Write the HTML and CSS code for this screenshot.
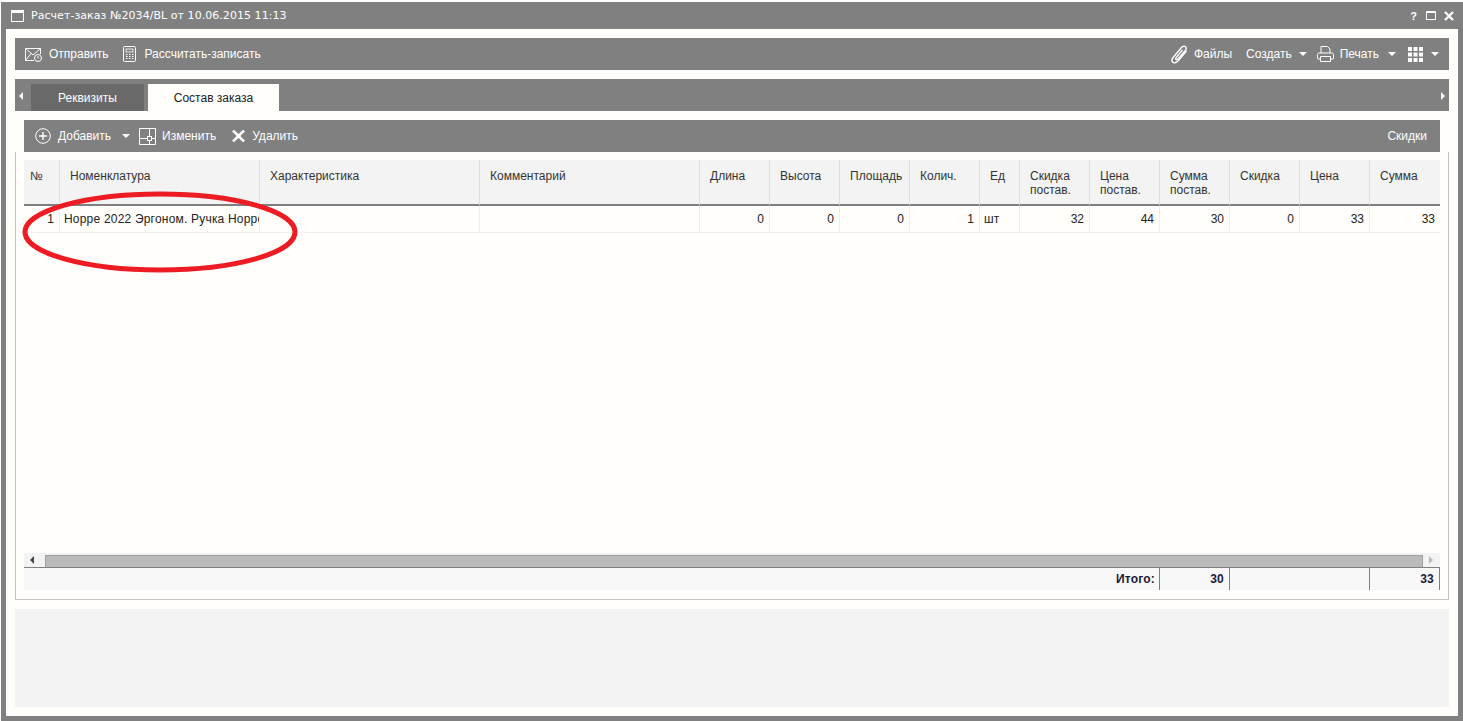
FILE: index.html
```html
<!DOCTYPE html>
<html lang="ru">
<head>
  <meta charset="UTF-8" />
  <title>Расчет-заказ №2034/BL</title>
  <link rel="stylesheet" href="styles.css">
</head>
<body>
  <div class="window">
    <div class="titlebar">
      <svg class="title-icon" width="13" height="12" viewBox="0 0 13 12"><rect x="0.5" y="0.5" width="12" height="11" fill="none" stroke="#fff"/><rect x="0" y="0" width="13" height="3" fill="#fff"/></svg>
      <span class="title">Расчет-заказ №2034/BL от 10.06.2015 11:13</span>
      <div class="window-btns">
        <span class="help">?</span>
        <svg width="10" height="9" viewBox="0 0 10 9"><rect x="0.5" y="1" width="9" height="7.5" fill="none" stroke="#fff"/><rect x="0" y="0" width="10" height="2" fill="#fff"/></svg>
        <svg width="10" height="10" viewBox="0 0 10 10"><path d="M1 1l8 8M9 1l-8 8" stroke="#fff" stroke-width="2.2" fill="none"/></svg>
      </div>
    </div>

    <div class="content">
      <div class="toolbar main-toolbar">
        <div class="tool">
          <svg width="18" height="15" viewBox="0 0 18 15"><path d="M9 13.500H.5V1.500h15V7M.5 1.500L8 8l7.500-6.500M.5 13.500L6 6.500" fill="none" stroke="#fff"/><circle cx="13" cy="11" r="3.500" fill="none" stroke="#fff"/><path d="M13 9v2.500" stroke="#fff"/></svg>
          Отправить
        </div>
        <div class="tool calc">
          <svg width="13" height="16" viewBox="0 0 13 16"><rect x="0.500" y="0.500" width="12" height="15" rx="1" fill="none" stroke="#fff"/><rect x="3" y="3" width="7" height="3" fill="none" stroke="#fff" stroke-width="0.800"/><path d="M3 8.500h1.500M6 8.500h1.500M9 8.500h1.500M3 10.500h1.500M6 10.500h1.500M9 10.500h1.500M3 12.500h1.500M6 12.500h1.500M9 12.500h1.500" stroke="#fff"/></svg>
          Рассчитать-записать
        </div>
        <div class="toolbar-right">
          <div class="tool files">
            <svg width="17" height="19" viewBox="0 0 17 19"><path d="M15.500 6L7 16c-1.800 2-4 2.300-5.200 1.200C.6 16.100.8 14 2.300 12.200L10.500 2.500c1.300-1.500 3-1.700 4-.8 1 .9.900 2.600-.3 4L7 14c-.7.800-1.500.9-2 .5-.5-.4-.4-1.300.3-2.100L11.500 5" fill="none" stroke="#fff" stroke-width="1.400"/></svg>
            Файлы
          </div>
          <div class="tool create">Создать <span class="caret"></span></div>
          <div class="tool print">
            <svg width="17" height="16" viewBox="0 0 17 16"><path d="M4 7V.500h6.500L13 3v4M3.500 13H1c-.3 0-.5-.2-.5-.5V8.500c0-.8.700-1.500 1.500-1.500h13c.8 0 1.500.7 1.500 1.500v4c0 .3-.2.500-.5.500h-2.500M3.500 10.500h10v5h-10z" fill="none" stroke="#fff"/></svg>
            Печать <span class="caret"></span>
          </div>
          <div class="tool grid-tool">
            <svg width="15" height="15" viewBox="0 0 15 15" fill="#fff"><path d="M0 0h4v4H0zM5.500 0h4v4h-4zM11 0h4v4h-4zM0 5.500h4v4H0zM5.500 5.500h4v4h-4zM11 5.500h4v4h-4zM0 11h4v4H0zM5.500 11h4v4h-4zM11 11h4v4h-4z"/></svg>
            <span class="caret"></span>
          </div>
        </div>
      </div>

      <div class="tabbar">
        <span class="tab-arrow left"></span>
        <div class="tab">Реквизиты</div>
        <div class="tab active">Состав заказа</div>
        <span class="tab-arrow right"></span>
      </div>

      <div class="tabpane">
        <div class="toolbar pane-toolbar">
          <div class="tool add">
            <svg width="16" height="16" viewBox="0 0 16 16"><circle cx="8" cy="8" r="7.300" fill="none" stroke="#fff"/><path d="M8 4v8M4 8h8" stroke="#fff" stroke-width="1.400"/></svg>
            Добавить <span class="caret"></span>
          </div>
          <div class="tool">
            <svg width="17" height="17" viewBox="0 0 17 17"><path d="M.500.500h16v16H.500zM10.500.500v16M.500 10.500h16" fill="none" stroke="#fff"/><rect x="8.500" y="8.500" width="4" height="4" fill="#808080" stroke="#fff"/></svg>
            Изменить
          </div>
          <div class="tool remove">
            <svg width="13" height="12" viewBox="0 0 13 12"><path d="M1 .5l11 11M12 .5l-11 11" stroke="#fff" stroke-width="2.600" fill="none"/></svg>
            Удалить
          </div>
          <div class="toolbar-right">
            <div class="tool">Скидки</div>
          </div>
        </div>

        <div class="pane-body">
          <div class="grid">
            <table class="grid-table">
              <colgroup>
                <col class="c-num"><col class="c-name"><col class="c-wide"><col class="c-wide">
                <col class="c-std"><col class="c-std"><col class="c-std"><col class="c-std">
                <col class="c-unit">
                <col class="c-std"><col class="c-std"><col class="c-std"><col class="c-std"><col class="c-std"><col class="c-std">
              </colgroup>
              <thead>
                <tr>
                  <th class="first">№</th>
                  <th>Номенклатура</th>
                  <th>Характеристика</th>
                  <th>Комментарий</th>
                  <th>Длина</th>
                  <th>Высота</th>
                  <th>Площадь</th>
                  <th>Колич.</th>
                  <th>Ед</th>
                  <th>Скидка<br>постав.</th>
                  <th>Цена<br>постав.</th>
                  <th>Сумма<br>постав.</th>
                  <th>Скидка</th>
                  <th>Цена</th>
                  <th class="last">Сумма</th>
                </tr>
              </thead>
              <tbody>
                <tr>
                  <td class="num">1</td>
                  <td class="text">Hoppe 2022 Эргоном. Ручка Hoppe</td>
                  <td></td>
                  <td></td>
                  <td class="num">0</td>
                  <td class="num">0</td>
                  <td class="num">0</td>
                  <td class="num">1</td>
                  <td class="text">шт</td>
                  <td class="num">32</td>
                  <td class="num">44</td>
                  <td class="num">30</td>
                  <td class="num">0</td>
                  <td class="num">33</td>
                  <td class="num last">33</td>
                </tr>
              </tbody>
            </table>

            <div class="scrollbar">
              <div class="scroll-btn"><span class="scroll-arrow left"></span></div>
              <div class="scroll-thumb"></div>
              <div class="scroll-btn end"><span class="scroll-arrow right"></span></div>
            </div>

            <div class="totals">
              <div class="total-label">Итого:</div>
              <div class="total-cell">30</div>
              <div class="total-cell gap"></div>
              <div class="total-cell">33</div>
            </div>
          </div>
        </div>
      </div>

      <div class="bottom-panel"></div>
    </div>
  </div>

  <svg class="red-mark" width="290" height="90" viewBox="0 0 290 90">
    <ellipse cx="145" cy="45" rx="135" ry="38" fill="none" stroke="#ed1c24" stroke-width="5"/>
  </svg>
</body>
</html>
```

FILE: styles.css
```css
body {
  margin: 0;
  background: #fff;
  font-family: 'Liberation Sans', Arial, sans-serif;
  font-size: 12px;
  color: #222;
  overflow: hidden;
}
.window {
  height: 719px;
  box-sizing: border-box;
  margin: 2px 0 0 1px;
  padding: 0 5px 5px 5px;
  background: #808080;
  display: flex;
  flex-direction: column;
}
.titlebar {
  height: 27px;
  flex: none;
  display: flex;
  align-items: center;
  color: #fff;
}
.title-icon { margin: 1px 0 0 5px; }
.title {
  margin-left: 7px;
  font-family: 'DejaVu Sans', sans-serif;
  font-size: 11px;
  letter-spacing: 0.05px;
}
.window-btns {
  margin-left: auto;
  display: flex;
  align-items: center;
  gap: 8px;
  padding-right: 4px;
}
.help { font-size: 11px; margin-right: 1px; font-weight: bold; }
.content {
  flex: 1;
  background: #fffefa;
  padding: 9px;
  display: flex;
  flex-direction: column;
}
.toolbar {
  height: 32px;
  flex: none;
  background: #808080;
  color: #fff;
  display: flex;
  align-items: center;
}
.main-toolbar { padding: 0 10px; gap: 14px; }
.toolbar-right {
  margin-left: auto;
  display: flex;
  align-items: center;
  gap: 12px;
}
.tool {
  display: flex;
  align-items: center;
  gap: 6px;
  white-space: nowrap;
}
.tool.calc { gap: 9px; }
.tool.files { margin-right: 2px; }
.tool.create { margin-right: -2px; }
.tool.create .caret { margin-left: 1px; }
.tool.print .caret { margin-left: 3px; }
.tool.add { margin-right: -7px; gap: 7px; }
.tool.remove { gap: 7px; }
.grid-tool .caret { margin-left: 2px; }
.caret {
  width: 0;
  height: 0;
  margin-left: 4px;
  border-left: 4px solid transparent;
  border-right: 4px solid transparent;
  border-top: 4px solid #fff;
}
.tabbar {
  height: 32px;
  flex: none;
  margin-top: 9px;
  background: #808080;
  display: flex;
  align-items: flex-end;
  gap: 4px;
  position: relative;
}
.tabbar .tab:first-of-type { margin-left: 16px; }
.tab {
  width: 113px;
  height: 27px;
  background: #696969;
  color: #fff;
  display: flex;
  align-items: center;
  justify-content: center;
}
.tab.active {
  width: 131px;
  background: #fffefa;
  color: #222;
}
.tab-arrow {
  position: absolute;
  top: 13px;
  width: 0;
  height: 0;
  border-top: 4px solid transparent;
  border-bottom: 4px solid transparent;
}
.tab-arrow.left { left: 4px; border-right: 4px solid #fff; }
.tab-arrow.right { right: 4px; border-left: 4px solid #fff; }
.tabpane {
  flex: none;
  display: flex;
  flex-direction: column;
}
.pane-toolbar { margin: 9px 9px 0; padding: 0 13px 0 11px; gap: 16px; }
.pane-body {
  height: 448px;
  box-sizing: border-box;
  padding: 8px 8px 9px;
  border: 1px solid #c4c4c4;
  border-top: none;
  background: #fffefa;
}
.grid {
  height: 100%;
  display: flex;
  flex-direction: column;
}
.grid-table {
  width: 1416px;
  table-layout: fixed;
  border-collapse: separate;
  border-spacing: 0;
  margin-bottom: auto;
}
.c-num { width: 36px; }
.c-name { width: 200px; }
.c-wide { width: 220px; }
.c-std { width: 70px; }
.c-unit { width: 40px; }
.grid-table th {
  height: 46px;
  padding: 9px 10px 0;
  box-sizing: border-box;
  vertical-align: top;
  text-align: left;
  font-weight: normal;
  line-height: 14px;
  color: #333;
  background: #f3f3f3;
  border-right: 1px solid #ddd;
  border-bottom: 2px solid #808080;
}
.grid-table th.first { padding-left: 6px; }
.grid-table th.last, .grid-table td.last { border-right: none; }
.grid-table td {
  height: 27px;
  padding: 0 4px;
  box-sizing: border-box;
  color: #222;
  white-space: nowrap;
  overflow: hidden;
  background: #fffefa;
  border-right: 1px solid #eee;
  border-bottom: 1px solid #eee;
}
.grid-table td.text { letter-spacing: 0.2px; }
.grid-table td.num { text-align: right; padding-right: 5px; }
.scrollbar {
  height: 15px;
  box-sizing: border-box;
  flex: none;
  background: #f3f3f3;
  border-bottom: 1px solid #808080;
  display: flex;
}
.scroll-btn {
  width: 21px;
  box-sizing: border-box;
  padding-left: 6px;
  display: flex;
  align-items: center;
}
.scroll-btn.end { width: 17px; margin-right: auto; }
.scroll-arrow {
  width: 0;
  height: 0;
  border-top: 4px solid transparent;
  border-bottom: 4px solid transparent;
}
.scroll-arrow.left { border-right: 4px solid #444; }
.scroll-arrow.right { border-left: 4px solid #bbb; }
.scroll-thumb {
  width: 1376px;
  margin-top: 2px;
  background: #bbb;
  border: 1px solid #a0a0a0;
  border-bottom: none;
}
.totals {
  height: 22px;
  flex: none;
  background: #f8f8f8;
  display: flex;
  font-weight: bold;
  color: #1a1a3a;
  letter-spacing: 0.2px;
}
.total-label {
  flex: 1;
  text-align: right;
  padding-right: 4px;
  line-height: 23px;
}
.total-cell {
  width: 64px;
  padding-right: 5px;
  text-align: right;
  line-height: 23px;
  border-left: 1px solid #808080;
}
.total-cell.gap { width: 139px; padding: 0; }
.totals .total-cell:last-child { border-right: 1px solid #808080; }
.bottom-panel {
  height: 98px;
  flex: none;
  margin-top: 9px;
  background: #f3f3f3;
}
.red-mark {
  position: absolute;
  left: 15px;
  top: 187px;
}
```
